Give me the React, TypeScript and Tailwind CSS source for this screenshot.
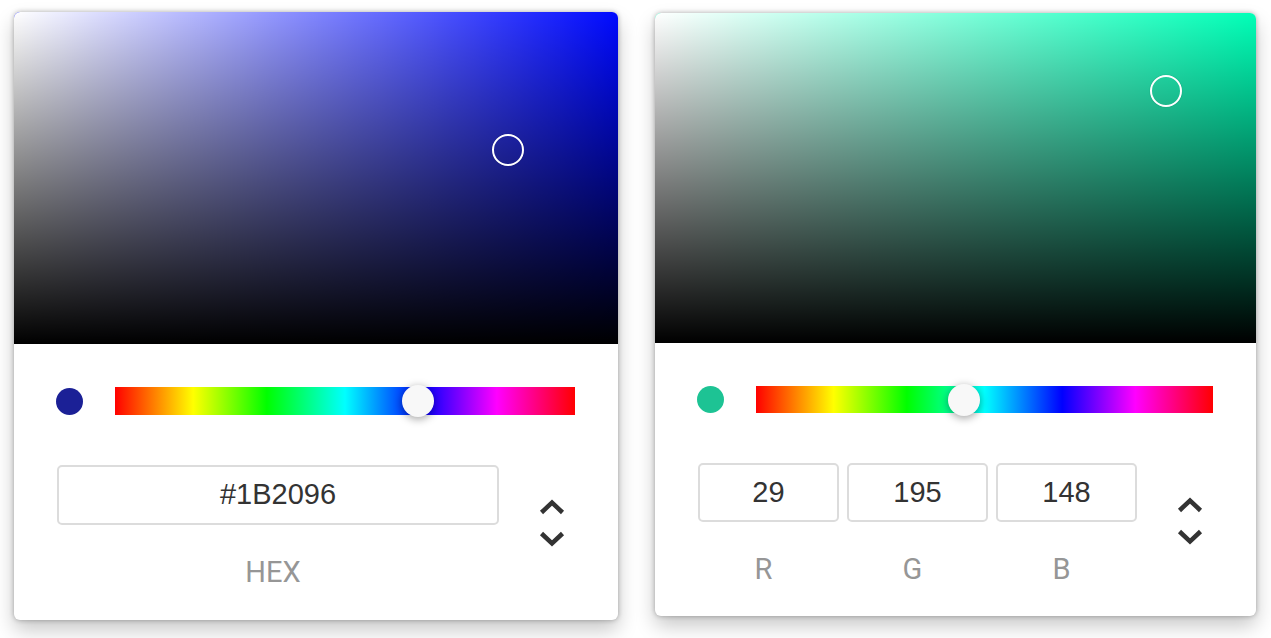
import React from "react";

type CardProps = {
  hueColor: string;
  pointerLeft: number;
  pointerTop: number;
  satHeight: number;
  hueLeft: string;
  swatch: string;
  fields: { value: string; label: string }[];
  bottomPad: string;
  hueRowH: string;
  inputH: string;
};

function Arrows() {
  return (
    <svg width="26" height="54" viewBox="0 0 26 54" className="mt-[30px] ml-[40px]">
      <polyline points="2.5,17.5 13,7.5 23.5,17.5" fill="none" stroke="#333" strokeWidth="4.5" />
      <polyline points="2.5,38.5 13,48.5 23.5,38.5" fill="none" stroke="#333" strokeWidth="4.5" />
    </svg>
  );
}

function Picker(p: CardProps) {
  return (
    <div className="flex flex-col bg-white rounded-[6px] shadow-[0_0_5px_rgba(0,0,0,0.3),0_10px_20px_rgba(0,0,0,0.22)]">
      <div
        className="relative rounded-t-[6px] overflow-hidden"
        style={{ height: p.satHeight, background: p.hueColor }}
      >
        <div className="absolute inset-0 bg-gradient-to-r from-white to-transparent" />
        <div className="absolute inset-0 bg-gradient-to-t from-black to-transparent" />
        <div
          className="absolute w-[32px] h-[32px] rounded-full border-[2.5px] border-white -translate-x-1/2 -translate-y-1/2 shadow-[0_0_1px_rgba(0,0,0,0.4)]"
          style={{ left: p.pointerLeft, top: p.pointerTop }}
        />
      </div>
      <div className={`px-[43px] pt-[43px] ${p.bottomPad}`}>
        <div className={`flex items-center ${p.hueRowH}`}>
          <div className="-ml-[1px] w-[27px] h-[27px] rounded-full shrink-0" style={{ background: p.swatch }} />
          <div className="relative ml-[32px] flex-1 h-full bg-[linear-gradient(to_right,#f00_0%,#ff0_17%,#0f0_33%,#0ff_50%,#00f_67%,#f0f_83%,#f00_100%)]">
            <div
              className="absolute top-1/2 w-[32px] h-[32px] rounded-full bg-[#f8f8f8] -translate-x-1/2 -translate-y-1/2 shadow-[0_2px_8px_rgba(0,0,0,0.37)]"
              style={{ left: p.hueLeft }}
            />
          </div>
        </div>
        <div className="flex mt-[50px]">
          <div className="flex-1 flex gap-[8px]">
            {p.fields.map((f) => (
              <div key={f.label} className="flex-1 flex flex-col items-center">
                <div
                  className={`w-full ${p.inputH} border-2 border-[#dcdcdc] rounded-[5px] flex items-center justify-center text-[29px] text-[#333] font-['Liberation_Sans',Arial,sans-serif]`}
                >
                  {f.value}
                </div>
                <div className="mt-[32px] pr-[10px] h-[30px] leading-[30px] text-[29px] text-[#969696] uppercase font-['Roboto',sans-serif]">
                  {f.label}
                </div>
              </div>
            ))}
          </div>
          <div className="w-[76px] shrink-0">
            <Arrows />
          </div>
        </div>
      </div>
    </div>
  );
}

export default function App() {
  return (
    <div className="w-[1271px] h-[638px] bg-white overflow-hidden flex items-start">
      <div className="ml-[14px] mt-[12px] w-[604px]">
        <Picker
          hueColor="#000aff"
          pointerLeft={494}
          pointerTop={138}
          satHeight={332}
          hueLeft="65.9%"
          swatch="#1B2096"
          fields={[{ value: "#1B2096", label: "HEX" }]}
          bottomPad="pb-[33px]"
          hueRowH="h-[28px]"
          inputH="h-[60px]"
        />
      </div>
      <div className="ml-[37px] mt-[13px] w-[601px]">
        <Picker
          hueColor="#00ffb7"
          pointerLeft={511}
          pointerTop={78}
          satHeight={330}
          hueLeft="45.6%"
          swatch="#1DC394"
          fields={[
            { value: "29", label: "R" },
            { value: "195", label: "G" },
            { value: "148", label: "B" },
          ]}
          bottomPad="pb-[32px]"
          hueRowH="h-[27px]"
          inputH="h-[59px]"
        />
      </div>
    </div>
  );
}
